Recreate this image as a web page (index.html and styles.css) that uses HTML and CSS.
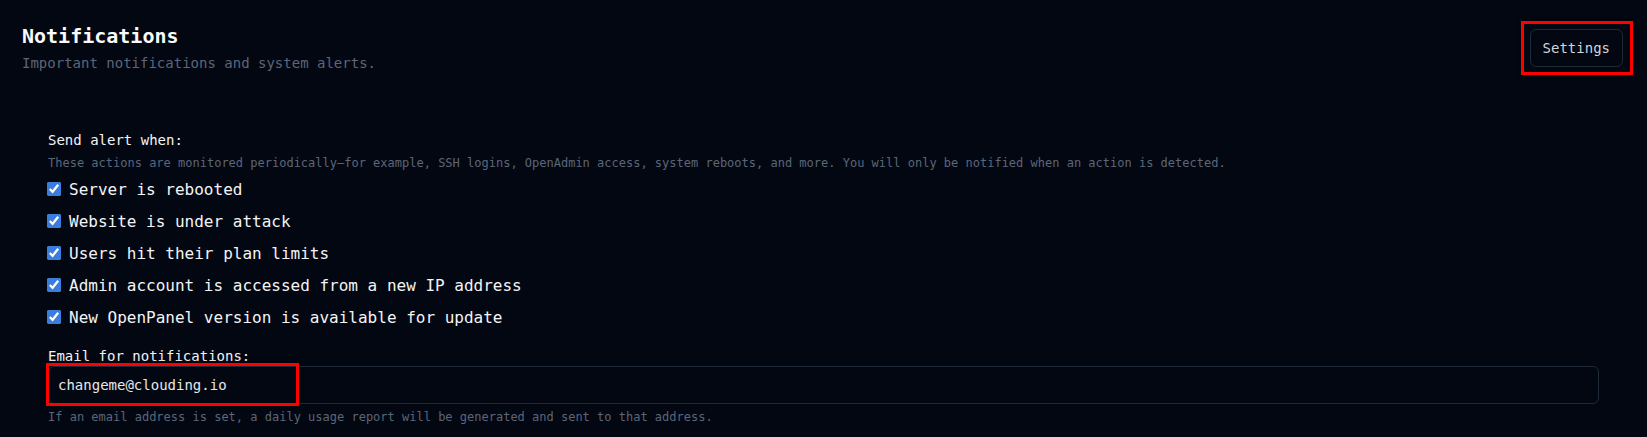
FILE: index.html
```html
<!DOCTYPE html>
<html lang="en">
<head>
  <meta charset="UTF-8">
  <meta name="viewport" content="width=device-width, initial-scale=1.0">
  <title>Notifications</title>
  <link rel="stylesheet" href="styles.css">
</head>
<body>

<div class="page">
  <div class="page-header">
    <div>
      <h1>Notifications</h1>
      <p class="subtitle">Important notifications and system alerts.</p>
    </div>
    <div class="btn-wrap">
      <button class="btn-settings">Settings</button>
      <div class="highlight highlight-btn"></div>
    </div>
  </div>

  <div class="section">
    <div class="field-label">Send alert when:</div>
    <p class="hint">These actions are monitored periodically—for example, SSH logins, OpenAdmin access, system reboots, and more. You will only be notified when an action is detected.</p>

    <div class="checks">
      <label class="check-row"><input type="checkbox" checked> Server is rebooted</label>
      <label class="check-row"><input type="checkbox" checked> Website is under attack</label>
      <label class="check-row"><input type="checkbox" checked> Users hit their plan limits</label>
      <label class="check-row"><input type="checkbox" checked> Admin account is accessed from a new IP address</label>
      <label class="check-row"><input type="checkbox" checked> New OpenPanel version is available for update</label>
    </div>

    <label class="field-label email-label" for="email">Email for notifications:</label>
    <div class="input-wrap">
      <input type="email" id="email" value="changeme@clouding.io">
      <div class="highlight highlight-input"></div>
    </div>
    <p class="hint hint-after">If an email address is set, a daily usage report will be generated and sent to that address.</p>
  </div>
</div>

</body>
</html>
```

FILE: styles.css
```css
body {
  margin: 0;
  background-color: #030712;
  color: #f3f4f6;
  font-family: "DejaVu Sans Mono", monospace;
}
.page {
  padding: 22px 24px 0 22px;
}
.page-header {
  display: flex;
  justify-content: space-between;
  align-items: flex-start;
}
h1 {
  margin: 0;
  font-size: 20px;
  line-height: 28px;
  font-weight: bold;
  color: #f9fafb;
}
.subtitle {
  margin: 3px 0 0;
  font-size: 14px;
  line-height: 20px;
  color: #5b6678;
}
.btn-wrap {
  position: relative;
  margin-top: 7px;
}
.btn-settings {
  display: block;
  padding: 8px 12px;
  font-family: inherit;
  font-size: 14px;
  line-height: 20px;
  color: #d1d5db;
  background-color: #030712;
  border: 1px solid #1f2937;
  border-radius: 6px;
  cursor: pointer;
}
.section {
  margin-top: 57px;
  padding-left: 26px;
  padding-right: 24px;
}
.field-label {
  display: block;
  font-size: 14px;
  line-height: 20px;
  color: #f3f4f6;
}
.hint {
  margin: 5px 0 0;
  font-size: 12px;
  line-height: 16px;
  color: #5b6678;
}
.checks {
  display: flex;
  flex-direction: column;
  gap: 8px;
  margin-top: 6px;
}
.check-row {
  display: flex;
  align-items: center;
  gap: 8px;
  height: 24px;
  font-size: 16px;
  color: #f3f4f6;
}
.check-row input {
  width: 14px;
  height: 14px;
  margin: 0 0 0 -1px;
  accent-color: #3b7ddd;
}
.email-label {
  margin-top: 17px;
}
.input-wrap {
  position: relative;
}
.input-wrap input {
  display: block;
  width: 100%;
  box-sizing: border-box;
  padding: 8px 9px;
  font-family: inherit;
  font-size: 14px;
  line-height: 20px;
  color: #e5e7eb;
  background-color: #030712;
  border: 1px solid #1f2937;
  border-radius: 6px;
  outline: none;
}
.highlight {
  position: absolute;
  box-sizing: border-box;
  border: 3px solid #ff0000;
  box-shadow: 0 0 4px rgba(0, 0, 0, 0.6);
  pointer-events: none;
}
.highlight-btn {
  left: -9px;
  right: -10px;
  top: -8px;
  bottom: -8px;
}
.highlight-input {
  left: -2px;
  top: -3px;
  width: 253px;
  height: 43px;
}
.hint-after {
  margin-top: 5px;
}
```
